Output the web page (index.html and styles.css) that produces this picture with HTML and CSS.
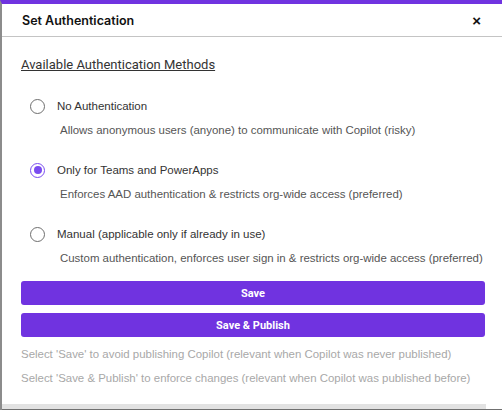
FILE: index.html
```html
<!DOCTYPE html>
<html>
<head>
<meta charset="utf-8">
<link rel="stylesheet" href="styles.css">
</head>
<body>
<div class="modal">
  <div class="header">
    <span class="title">Set Authentication</span>
    <span class="close">×</span>
  </div>
  <div class="content">
    <div class="section-title">Available Authentication Methods</div>
    <div class="option">
      <div class="row"><span class="radio"></span><span class="label">No Authentication</span></div>
      <div class="desc">Allows anonymous users (anyone) to communicate with Copilot (risky)</div>
    </div>
    <div class="option">
      <div class="row"><span class="radio checked"></span><span class="label">Only for Teams and PowerApps</span></div>
      <div class="desc">Enforces AAD authentication &amp; restricts org-wide access (preferred)</div>
    </div>
    <div class="option">
      <div class="row"><span class="radio"></span><span class="label">Manual (applicable only if already in use)</span></div>
      <div class="desc">Custom authentication, enforces user sign in &amp; restricts org-wide access (preferred)</div>
    </div>
    <div class="buttons">
      <button class="btn">Save</button>
      <button class="btn">Save &amp; Publish</button>
    </div>
    <div class="notes">
      <div class="note">Select 'Save' to avoid publishing Copilot (relevant when Copilot was never published)</div>
      <div class="note">Select 'Save &amp; Publish' to enforce changes (relevant when Copilot was published before)</div>
    </div>
  </div>
  <div class="scrollbar"><div class="thumb"></div></div>
</div>
</body>
</html>
```
FILE: styles.css
```css
html, body {
  margin: 0;
  padding: 0;
  background: #ffffff;
}
body {
  width: 502px;
  height: 410px;
  overflow: hidden;
  font-family: "Liberation Sans", Arial, sans-serif;
}
.modal {
  height: 410px;
  box-sizing: border-box;
  border-left: 2px solid #8c8c8c;
  border-top: 4px solid #7033e0;
  display: flex;
  flex-direction: column;
}
.header {
  height: 33px;
  box-sizing: border-box;
  border-bottom: 1px solid #c4c4c4;
  display: flex;
  align-items: center;
  justify-content: space-between;
  padding: 0 20px 0 20px;
}
.title {
  font-family: Inter, "Liberation Sans", Arial, sans-serif;
  font-weight: 600;
  font-size: 12.5px;
  color: #111;
}
.close {
  font-family: "Liberation Sans", Arial, sans-serif;
  font-weight: bold;
  font-size: 15px;
  color: #111;
  margin-right: 1px;
}
.content {
  flex: 1;
  padding: 20px 17px 0 19px;
}
.section-title {
  font-family: Roboto, "Liberation Sans", Arial, sans-serif;
  font-size: 13px;
  line-height: 16px;
  color: #333;
  text-decoration: underline;
  margin-bottom: 23px;
}
.option {
  margin-bottom: 22px;
}
.row {
  display: flex;
  align-items: center;
  height: 20px;
}
.radio {
  width: 15px;
  height: 15px;
  box-sizing: border-box;
  border: 1.5px solid #6e6e6e;
  border-radius: 50%;
  margin-left: 9px;
  margin-right: 12px;
  display: flex;
  align-items: center;
  justify-content: center;
}
.radio.checked {
  border-color: #7a4cf0;
}
.radio.checked::after {
  content: "";
  width: 8px;
  height: 8px;
  border-radius: 50%;
  background: #7a4cf0;
}
.label {
  font-size: 11.5px;
  color: #333;
}
.desc {
  font-size: 11.45px;
  line-height: 16px;
  color: #555;
  margin-top: 6px;
  padding-left: 39px;
}
.buttons {
  display: flex;
  flex-direction: column;
  gap: 8px;
  margin-top: -7px;
}
.btn {
  height: 24px;
  border: none;
  border-radius: 3px;
  background: #7033e0;
  color: #fff;
  font-family: Roboto, "Liberation Sans", Arial, sans-serif;
  font-weight: bold;
  font-size: 11px;
  padding: 0;
}
.notes {
  margin-top: 9px;
  display: flex;
  flex-direction: column;
  gap: 8px;
}
.note {
  font-size: 11.45px;
  line-height: 16px;
  color: #a8a8a8;
}
.scrollbar {
  height: 5px;
  background: #ffffff;
  border-bottom: 1px solid #707070;
}
.thumb {
  width: 484px;
  height: 5px;
  background: #e2e2e2;
}
```
